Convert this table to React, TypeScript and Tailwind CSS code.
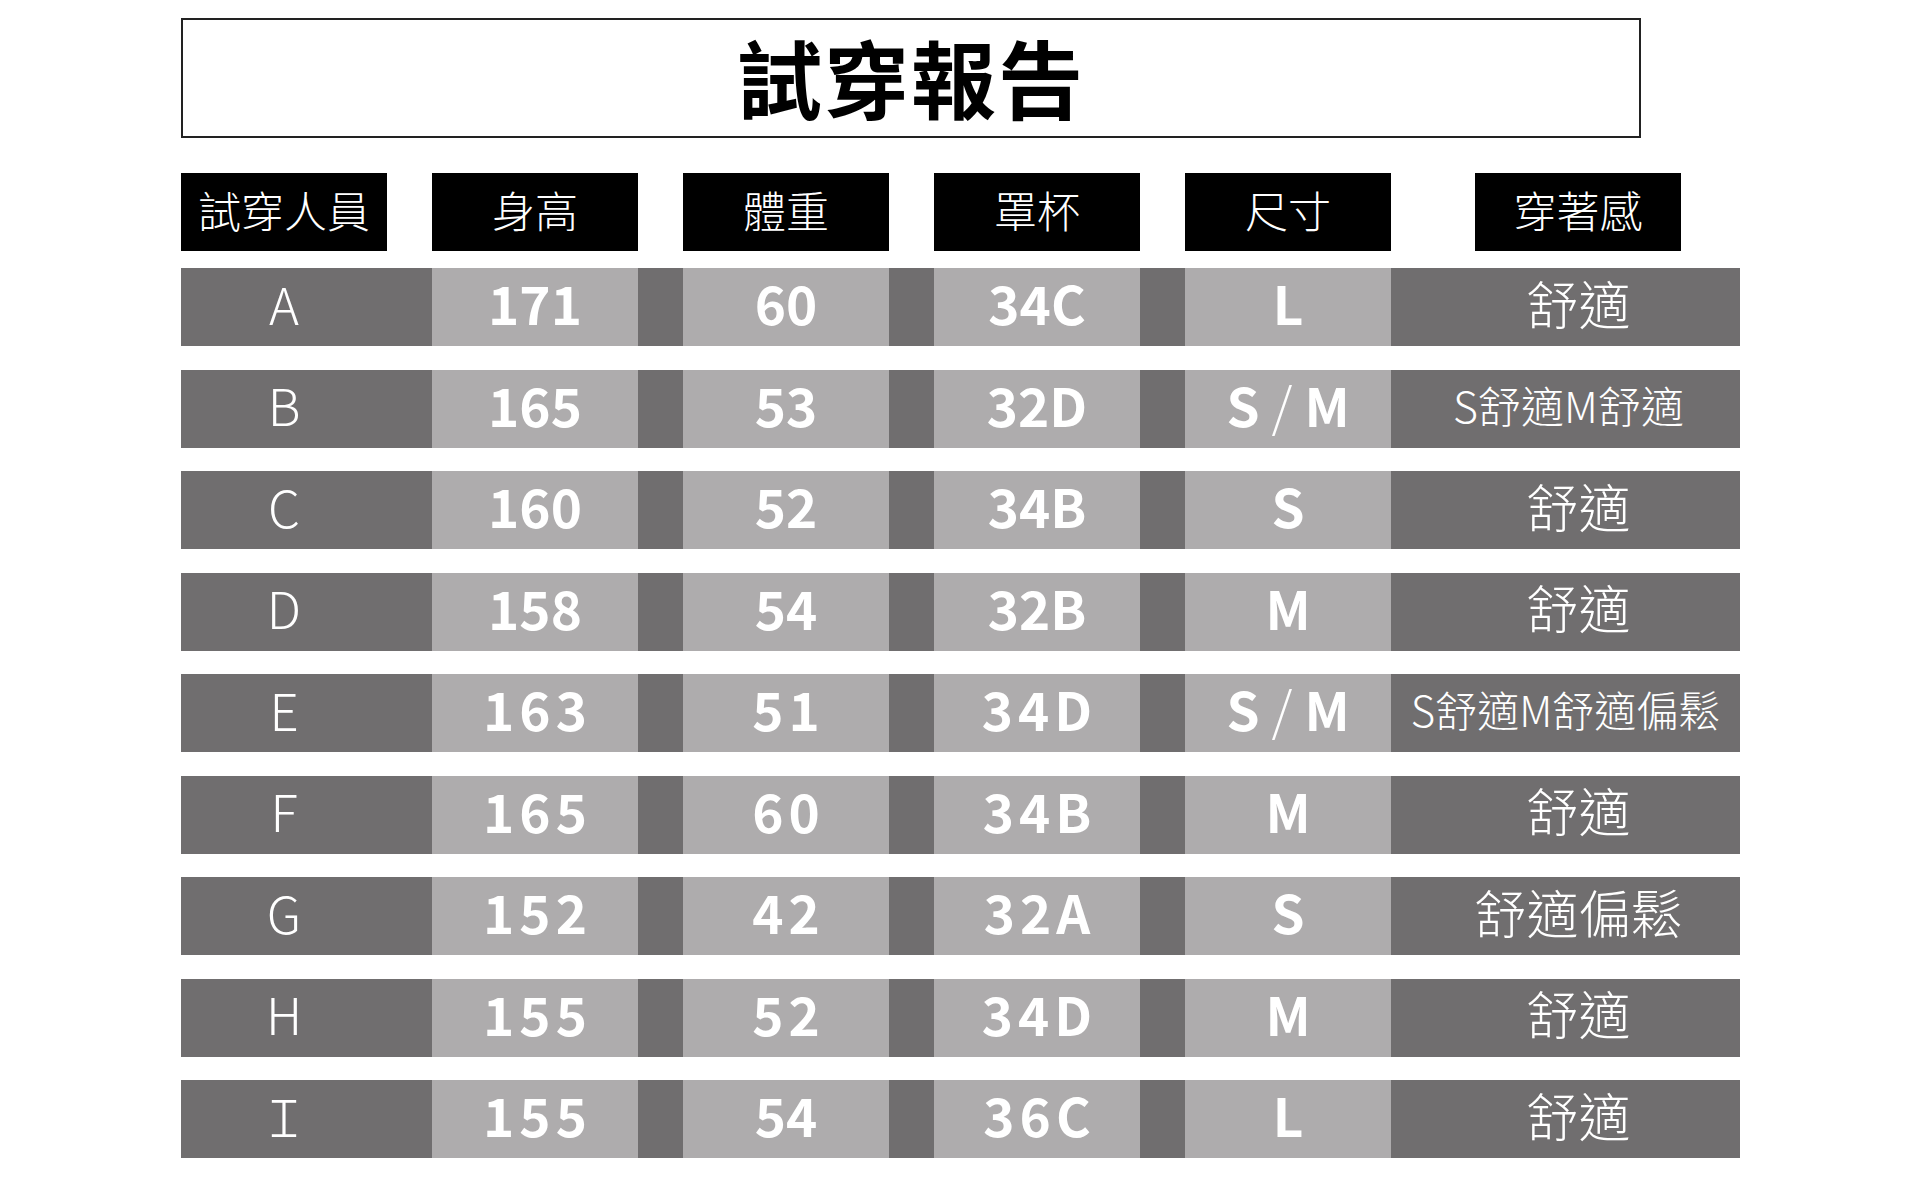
const font = "font-['Noto_Sans_CJK_TC','Noto_Sans',sans-serif]";

type Row = {
  id: string;
  h: string;
  w: string;
  cup: string;
  size: string;
  feel: string;
  wide: [boolean, boolean, boolean];
  feelCls: string;
};

const rows: Row[] = [
  { id: "A", h: "171", w: "60", cup: "34C", size: "L", feel: "舒適", wide: [false, false, false], feelCls: "pl-[26px] text-[52px]" },
  { id: "B", h: "165", w: "53", cup: "32D", size: "S / M", feel: "S舒適M舒適", wide: [false, false, false], feelCls: "pl-[6px] text-[43px]" },
  { id: "C", h: "160", w: "52", cup: "34B", size: "S", feel: "舒適", wide: [false, false, false], feelCls: "pl-[26px] text-[52px]" },
  { id: "D", h: "158", w: "54", cup: "32B", size: "M", feel: "舒適", wide: [false, false, false], feelCls: "pl-[26px] text-[52px]" },
  { id: "E", h: "163", w: "51", cup: "34D", size: "S / M", feel: "S舒適M舒適偏鬆", wide: [true, true, true], feelCls: "pl-0 text-[42px]" },
  { id: "F", h: "165", w: "60", cup: "34B", size: "M", feel: "舒適", wide: [true, true, true], feelCls: "pl-[26px] text-[52px]" },
  { id: "G", h: "152", w: "42", cup: "32A", size: "S", feel: "舒適偏鬆", wide: [true, true, true], feelCls: "pl-[26px] text-[52px]" },
  { id: "H", h: "155", w: "52", cup: "34D", size: "M", feel: "舒適", wide: [true, true, true], feelCls: "pl-[26px] text-[52px]" },
  { id: "I", h: "155", w: "54", cup: "36C", size: "L", feel: "舒適", wide: [true, false, true], feelCls: "pl-[26px] text-[52px]" },
];

const headers = ["試穿人員", "身高", "體重", "罩杯", "尺寸"];

function Num({ value, wide }: { value: string; wide: boolean }) {
  return (
    <div className="flex h-full w-[206px] shrink-0 items-center justify-center bg-[#aeacad] pb-[9px]">
      <span
        className={`text-[53px] font-bold leading-none text-white ${wide ? "tracking-[5px] pl-[5px]" : "tracking-normal"}`}
      >
        {value}
      </span>
    </div>
  );
}

function Size({ value }: { value: string }) {
  const parts = value.split(" / ");
  return (
    <div className="flex h-full w-[206px] shrink-0 items-center justify-center bg-[#aeacad] pb-[9px]">
      <span className="text-[53px] font-bold leading-none text-white">
        {parts.length === 2 ? (
          <>
            {parts[0]}
            <span className="px-[12px] font-light">/</span>
            {parts[1]}
          </>
        ) : (
          value
        )}
      </span>
    </div>
  );
}

function Gap() {
  return <div className="w-[45px] shrink-0" />;
}

export default function App() {
  return (
    <div className={`h-[1192px] w-[1920px] bg-white pl-[181px] pt-[18px] ${font}`}>
      <div className="flex h-[120px] w-[1460px] items-center justify-center border-2 border-[#222] pb-[6px]">
        <h1 className="text-[85px] font-bold leading-none tracking-[2px] text-black">試穿報告</h1>
      </div>

      <div className="mt-[35px] flex h-[78px]">
        {headers.map((h, i) => (
          <div
            key={h}
            className={`flex h-full w-[206px] items-center justify-center bg-black pb-[6px] ${i > 0 ? "ml-[45px]" : ""}`}
          >
            <span className="text-[43px] font-light leading-none text-white">{h}</span>
          </div>
        ))}
        <div className="ml-[84px] flex h-full w-[206px] items-center justify-center bg-black pb-[6px]">
          <span className="text-[43px] font-light leading-none text-white">穿著感</span>
        </div>
      </div>

      <div className="mt-[17px] flex flex-col gap-[23.5px]">
        {rows.map((r) => (
          <div key={r.id} className="flex h-[78px] w-[1559px] bg-[#706e6f]">
            <div className="flex h-full w-[206px] shrink-0 items-center justify-center pb-[8px]">
              <span className="text-[51px] font-light leading-none text-white">
                {r.id === "I" ? "Ｉ" : r.id}
              </span>
            </div>
            <Gap />
            <Num value={r.h} wide={r.wide[0]} />
            <Gap />
            <Num value={r.w} wide={r.wide[1]} />
            <Gap />
            <Num value={r.cup} wide={r.wide[2]} />
            <Gap />
            <Size value={r.size} />
            <div className={`flex h-full min-w-0 flex-1 items-center justify-center pb-[9px] ${r.feelCls}`}>
              <span className="whitespace-nowrap font-light leading-none text-white">{r.feel}</span>
            </div>
          </div>
        ))}
      </div>
    </div>
  );
}
